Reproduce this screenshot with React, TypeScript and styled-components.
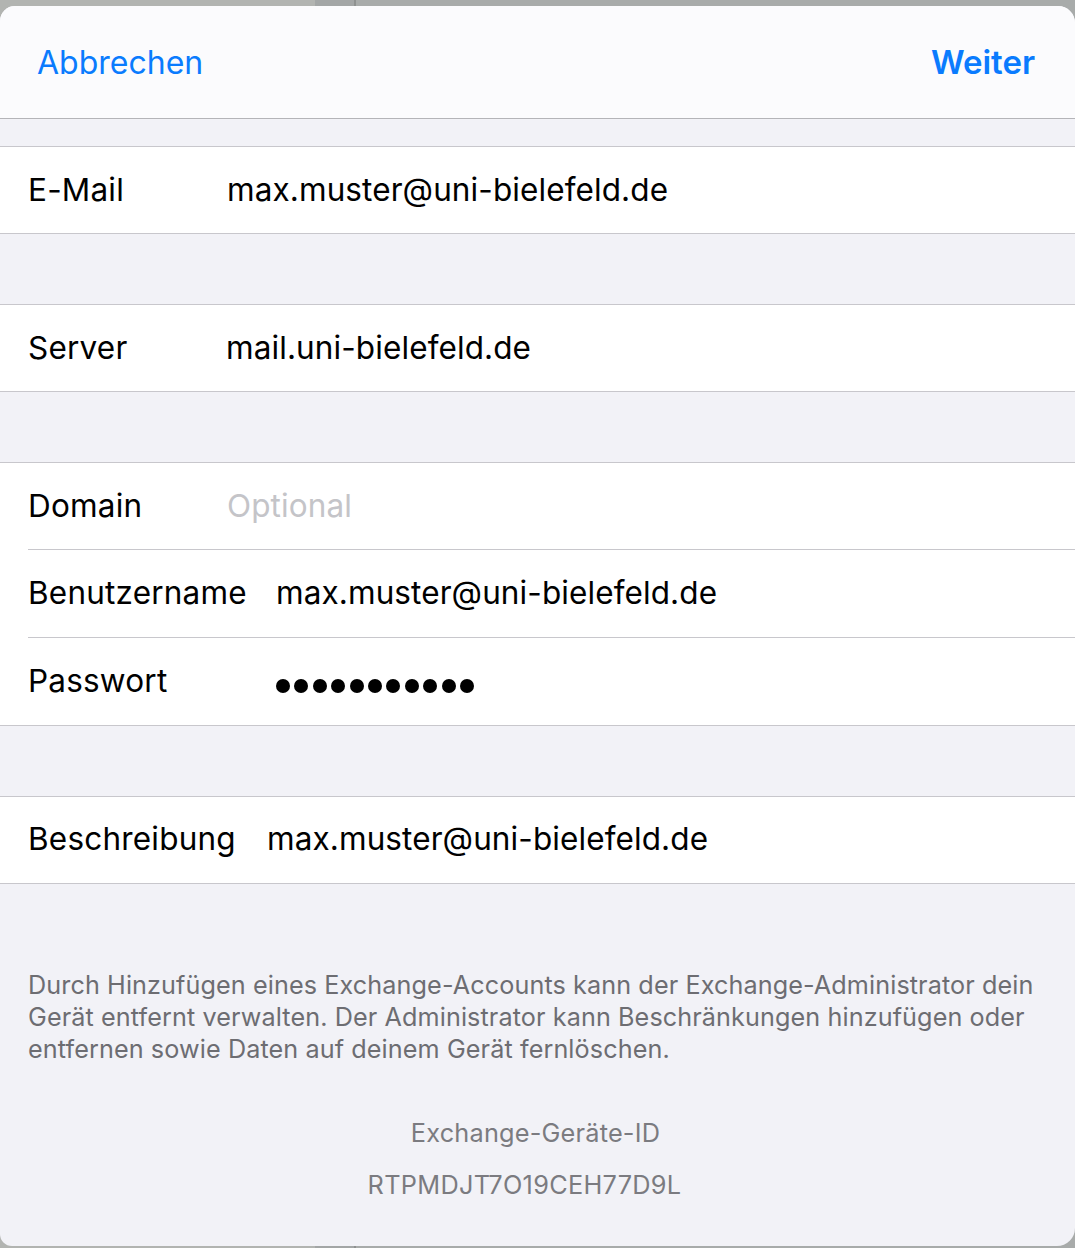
import React from "react";
import styled, { createGlobalStyle } from "styled-components";

const GlobalStyle = createGlobalStyle`
  html, body {
    margin: 0;
    padding: 0;
  }
  body {
    background: linear-gradient(
      90deg,
      #b2b4b1 0,
      #b2b4b1 315px,
      #a3a6a6 315px,
      #a3a6a6 354px,
      #8e9190 354px,
      #8e9190 356px,
      #a8abaa 356px
    );
    font-family: Inter, "Noto Sans", "Liberation Sans", sans-serif;
    -webkit-font-smoothing: antialiased;
  }
`;

const Page = styled.div`
  width: 1075px;
  height: 1248px;
  padding: 6px 0 2px;
  box-sizing: border-box;
`;

const Sheet = styled.div`
  height: 100%;
  background: #f2f2f7;
  border-radius: 15px 17px 18px 12px;
  overflow: hidden;
  display: flex;
  flex-direction: column;
`;

const NavBar = styled.div`
  height: 113px;
  flex-shrink: 0;
  background: #fbfbfd;
  border-bottom: 1px solid #b4b4b8;
  display: flex;
  align-items: center;
  justify-content: space-between;
  padding: 0 40px 0 37px;
  box-sizing: border-box;
`;

const NavButton = styled.button<{ $bold?: boolean }>`
  border: 0;
  background: none;
  padding: 0;
  font-family: inherit;
  font-size: ${(p) => (p.$bold ? 33 : 32)}px;
  font-weight: ${(p) => (p.$bold ? 600 : 400)};
  color: #0a7bfe;
`;

const Gap = styled.div<{ $h: number }>`
  height: ${(p) => p.$h}px;
  flex-shrink: 0;
`;

const Group = styled.div`
  background: #ffffff;
  border-top: 1px solid #c8c7cc;
  border-bottom: 1px solid #c8c7cc;
  flex-shrink: 0;
`;

const Row = styled.div<{ $labelW: number; $h: number; $last?: boolean }>`
  height: ${(p) => p.$h}px;
  margin-left: 28px;
  padding-bottom: 2px;
  display: grid;
  grid-template-columns: ${(p) => p.$labelW}px 1fr;
  align-items: center;
  border-bottom: ${(p) => (p.$last ? "0" : "1px solid #c8c7cc")};
  box-sizing: border-box;
`;

const Label = styled.div`
  font-size: 31.5px;
  color: #000;
  letter-spacing: 0.2px;
`;

const Value = styled.div<{ $placeholder?: boolean }>`
  font-size: 31.5px;
  color: ${(p) => (p.$placeholder ? "#c4c4c8" : "#000")};
  letter-spacing: 0.1px;
`;

const Dots = styled.div`
  display: flex;
  gap: 4.4px;
  margin-top: 12px;
`;

const Dot = styled.span`
  width: 14px;
  height: 14px;
  border-radius: 50%;
  background: #000;
`;

const FooterText = styled.p`
  margin: 0;
  padding: 0 10px 0 28px;
  font-size: 25.2px;
  line-height: 32px;
  color: #6d6d72;
  letter-spacing: 0.1px;
  white-space: nowrap;
`;

const DeviceTitle = styled.div`
  text-align: center;
  font-size: 25.3px;
  color: #7b7b80;
  letter-spacing: 0.2px;
  padding-right: 4px;
`;

const DeviceId = styled.div`
  text-align: center;
  font-size: 25.3px;
  color: #7b7b80;
  letter-spacing: 0.3px;
  margin-top: 21px;
  padding-right: 26px;
`;

type Field = {
  label: string;
  labelW: number;
  value?: string;
  placeholder?: string;
  password?: boolean;
};

function FieldGroup({ fields }: { fields: Field[] }) {
  const multi = fields.length > 1;
  return (
    <Group>
      {fields.map((f, i) => (
        <Row
          key={f.label}
          $labelW={f.labelW}
          $h={multi ? 87.33 : 86}
          $last={i === fields.length - 1}
        >
          <Label>{f.label}</Label>
          {f.password ? (
            <Dots>
              {Array.from({ length: 11 }).map((_, j) => (
                <Dot key={j} />
              ))}
            </Dots>
          ) : f.value ? (
            <Value>{f.value}</Value>
          ) : (
            <Value $placeholder>{f.placeholder}</Value>
          )}
        </Row>
      ))}
    </Group>
  );
}

export default function App() {
  return (
    <Page>
      <GlobalStyle />
      <Sheet>
        <NavBar>
          <NavButton>Abbrechen</NavButton>
          <NavButton $bold>Weiter</NavButton>
        </NavBar>
        <Gap $h={27} />
        <FieldGroup fields={[{ label: "E-Mail", labelW: 199, value: "max.muster@uni-bielefeld.de" }]} />
        <Gap $h={70} />
        <FieldGroup fields={[{ label: "Server", labelW: 198, value: "mail.uni-bielefeld.de" }]} />
        <Gap $h={70} />
        <FieldGroup
          fields={[
            { label: "Domain", labelW: 199, placeholder: "Optional" },
            { label: "Benutzername", labelW: 248, value: "max.muster@uni-bielefeld.de" },
            { label: "Passwort", labelW: 248, password: true },
          ]}
        />
        <Gap $h={70} />
        <FieldGroup
          fields={[{ label: "Beschreibung", labelW: 239, value: "max.muster@uni-bielefeld.de" }]}
        />
        <Gap $h={85} />
        <FooterText>
          Durch Hinzufügen eines Exchange-Accounts kann der Exchange-Administrator dein
          <br />
          Gerät entfernt verwalten. Der Administrator kann Beschränkungen hinzufügen oder
          <br />
          entfernen sowie Daten auf deinem Gerät fernlöschen.
        </FooterText>
        <Gap $h={52} />
        <DeviceTitle>Exchange-Geräte-ID</DeviceTitle>
        <DeviceId>RTPMDJT7O19CEH77D9L</DeviceId>
      </Sheet>
    </Page>
  );
}
